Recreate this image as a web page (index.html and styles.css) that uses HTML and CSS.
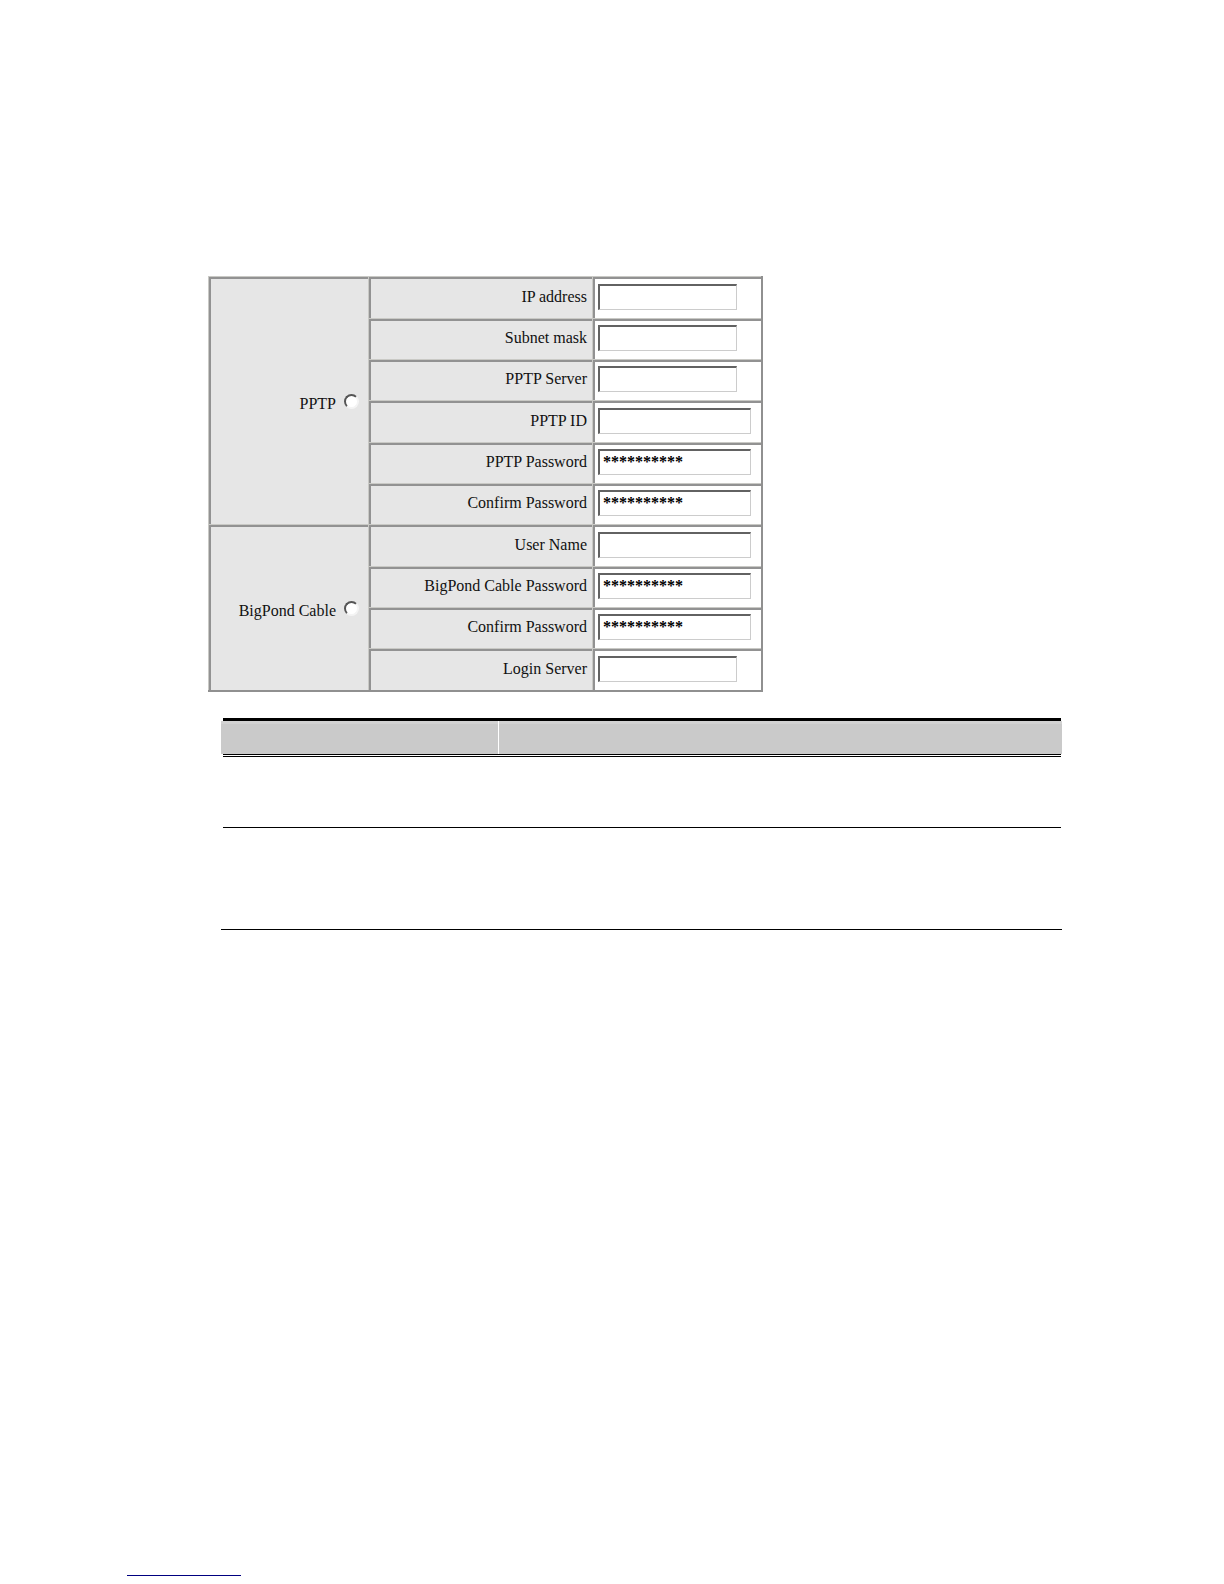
FILE: index.html
```html
<!DOCTYPE html>
<html lang="en">
<head>
<meta charset="utf-8">
<title>WAN settings</title>
<link rel="stylesheet" href="styles.css">
</head>
<body>
<main class="page">
  <form class="settings">
    <table class="wan">
      <colgroup><col class="col-mode"><col class="col-label"><col class="col-field"></colgroup>
      <tbody>
      <tr><th rowspan="6" scope="rowgroup"><label class="mode" for="pptp">PPTP <input class="radio" type="radio" name="mode" id="pptp"></label></th>
        <th><label for="ip">IP address</label></th><td><input class="field" type="text" id="ip"></td></tr>
      <tr><th><label for="mask">Subnet mask</label></th><td><input class="field" type="text" id="mask"></td></tr>
      <tr><th><label for="server">PPTP Server</label></th><td><input class="field" type="text" id="server"></td></tr>
      <tr><th><label for="pid">PPTP ID</label></th><td><input class="field wide" type="text" id="pid"></td></tr>
      <tr><th><label for="ppw">PPTP Password</label></th><td><input class="field wide" type="text" id="ppw" value="**********"></td></tr>
      <tr><th><label for="ppw2">Confirm Password</label></th><td><input class="field wide" type="text" id="ppw2" value="**********"></td></tr>
      <tr><th rowspan="4" scope="rowgroup"><label class="mode" for="bigpond">BigPond Cable <input class="radio" type="radio" name="mode" id="bigpond"></label></th>
        <th><label for="user">User Name</label></th><td><input class="field wide" type="text" id="user"></td></tr>
      <tr><th><label for="bpw">BigPond Cable Password</label></th><td><input class="field wide" type="text" id="bpw" value="**********"></td></tr>
      <tr><th><label for="bpw2">Confirm Password</label></th><td><input class="field wide" type="text" id="bpw2" value="**********"></td></tr>
      <tr><th><label for="login">Login Server</label></th><td><input class="field" type="text" id="login"></td></tr>
      </tbody>
    </table>
  </form>
  <section class="params">
    <hr class="rule thick">
    <div class="params-head"><div></div><div></div></div>
    <hr class="rule double">
    <div class="params-row short"></div>
    <hr class="rule thin">
    <div class="params-row tall"></div>
  </section>
  <footer class="footer"><hr class="footer-rule"></footer>
</main>
</body>
</html>
```
FILE: styles.css
```css
* { box-sizing: border-box; }
body {
  margin: 0;
  background: #fff;
  color: #111;
  font: 16px/20px "Liberation Serif", "Times New Roman", serif;
}
.page {
  display: flex;
  flex-direction: column;
  min-height: 100vh;
  padding: 276px 162px 8px 208px;
}
.wan {
  table-layout: fixed;
  width: 555px;
  border-spacing: 0;
  border-right: 2px solid #909090;
  border-bottom: 2px solid #909090;
}
.col-mode { width: 160px; }
.col-label { width: 224px; }
.wan tr { height: 41px; }
.wan tr:nth-child(3n+1) { height: 42px; }
.wan th, .wan td {
  padding: 0 5px 2px;
  border: 0 solid #c9c9c5;
  border-width: 1px 0 0 1px;
  box-shadow: inset 2px 2px 0 #929292;
  text-align: left;
}
.wan th {
  background: #e6e6e6;
  font-weight: 400;
  text-align: right;
}
.mode {
  display: flex;
  justify-content: flex-end;
  align-items: center;
  gap: 8px;
  padding: 8px 4px 0 0;
}
.radio {
  appearance: none;
  width: 15px;
  height: 15px;
  margin: 0 0 4px;
  border: 2px solid;
  border-color: #555 #f4f4f4 #f4f4f4 #555;
  border-radius: 50%;
  background: #fff;
}
.field {
  display: block;
  width: 139px;
  height: 26px;
  margin: 0;
  padding: 0 3px 2px;
  border: solid;
  border-width: 2px 1px 1px 2px;
  border-color: #626262 #ccc #ccc #626262;
  border-radius: 0;
  background: #fff;
  color: #000;
  font: inherit;
  font-weight: 700;
}
.wide { width: 153px; }
.params {
  margin: 26px 0 0 13px;
  border-bottom: 1px solid #000;
}
.rule {
  margin: 0 1px 0 2px;
  border: 0 solid #000;
}
.thick { border-top-width: 3px; }
.double { border-top: 3px double #000; }
.thin { border-top-width: 1px; }
.params-head {
  display: grid;
  grid-template-columns: 277px 1fr;
  gap: 1px;
  height: 33px;
}
.params-head div {
  border-top: 3px solid #d2d2d2;
  background: #cacaca;
}
.params-row.short { height: 70px; }
.params-row.tall { height: 101px; }
.footer { margin: auto 0 0 -81px; }
.footer-rule {
  width: 114px;
  margin: 0;
  border: 0;
  border-top: 1px solid #000080;
}
```
